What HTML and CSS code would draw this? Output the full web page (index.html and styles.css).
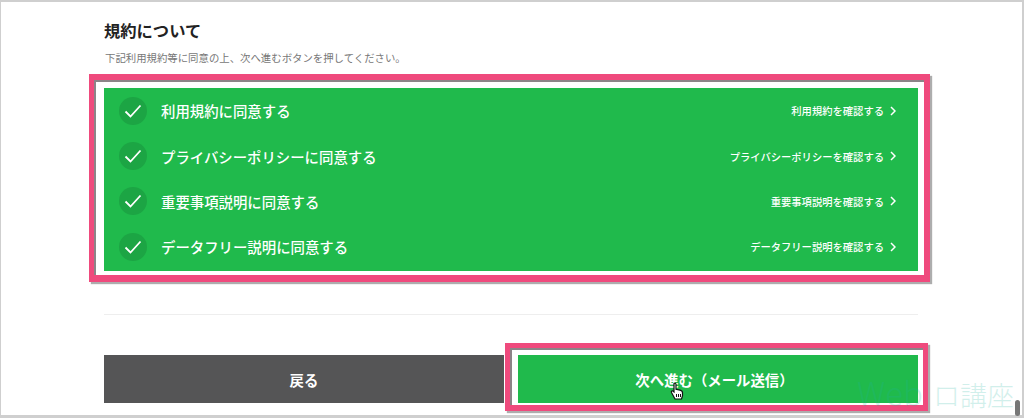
FILE: index.html
```html
<!DOCTYPE html>
<html lang="ja">
<head>
<meta charset="utf-8">
<title>規約について</title>
<link rel="stylesheet" href="styles.css">
</head>
<body>
<main class="frame">
  <h2 class="title">規約について</h2>
  <p class="lead">下記利用規約等に同意の上、次へ進むボタンを押してください。</p>
  <ul class="terms">
    <li class="term">
      <span class="check"><svg viewBox="0 0 28 28" width="28" height="28"><path d="M6.500 14.500l5 5 10-11" fill="none" stroke="#fff" stroke-width="1.800"/></svg></span>
      <span class="term-label">利用規約に同意する</span>
      <a class="term-link">利用規約を確認する<svg class="chev" viewBox="0 0 6 10" width="6" height="10"><path d="M1 1l4 4-4 4" fill="none" stroke="#fff" stroke-width="1.500"/></svg></a>
    </li>
    <li class="term">
      <span class="check"><svg viewBox="0 0 28 28" width="28" height="28"><path d="M6.500 14.500l5 5 10-11" fill="none" stroke="#fff" stroke-width="1.800"/></svg></span>
      <span class="term-label">プライバシーポリシーに同意する</span>
      <a class="term-link">プライバシーポリシーを確認する<svg class="chev" viewBox="0 0 6 10" width="6" height="10"><path d="M1 1l4 4-4 4" fill="none" stroke="#fff" stroke-width="1.500"/></svg></a>
    </li>
    <li class="term">
      <span class="check"><svg viewBox="0 0 28 28" width="28" height="28"><path d="M6.500 14.500l5 5 10-11" fill="none" stroke="#fff" stroke-width="1.800"/></svg></span>
      <span class="term-label">重要事項説明に同意する</span>
      <a class="term-link">重要事項説明を確認する<svg class="chev" viewBox="0 0 6 10" width="6" height="10"><path d="M1 1l4 4-4 4" fill="none" stroke="#fff" stroke-width="1.500"/></svg></a>
    </li>
    <li class="term">
      <span class="check"><svg viewBox="0 0 28 28" width="28" height="28"><path d="M6.500 14.500l5 5 10-11" fill="none" stroke="#fff" stroke-width="1.800"/></svg></span>
      <span class="term-label">データフリー説明に同意する</span>
      <a class="term-link">データフリー説明を確認する<svg class="chev" viewBox="0 0 6 10" width="6" height="10"><path d="M1 1l4 4-4 4" fill="none" stroke="#fff" stroke-width="1.500"/></svg></a>
    </li>
  </ul>
  <hr class="rule">
  <div class="actions">
    <a class="btn btn-back">戻る</a>
    <a class="btn btn-next">次へ進む（メール送信）</a>
  </div>
</main>
<div class="mark mark-terms"></div>
<div class="mark mark-next"></div>
<svg class="cursor" viewBox="0 0 14 18" width="14" height="18"><path d="M4 1.500c1-.8 2-.2 2 .8v5l4 .9c1.600.4 2.500 1 2.500 2.500v3l-1 3.300H5L1.500 10.500c-.6-1.300.8-2 1.700-1.200L4 10z" fill="#fff" stroke="#111" stroke-width="1.200"/><path d="M6.500 12v3M8.500 12v3M10.500 12v3" stroke="#111" stroke-width="1"/></svg>
<div class="watermark">Web<span class="wm-jp">ロ講座</span></div>
<div class="scroll-thumb"></div>
</body>
</html>
```
FILE: styles.css
```css
* { box-sizing: border-box; }
html, body { margin: 0; padding: 0; height: 418px; overflow: hidden; background: #fff; }
body { font-family: "Noto Sans CJK JP", "Noto Sans", sans-serif; position: relative; }
.frame {
  height: 418px;
  padding: 18px 104px 0 103px;
  border: 1px solid #cfcfcf;
  border-top-width: 2px;
  border-bottom-width: 3px;
  border-right-width: 2px;
  overflow: hidden;
}
.title { margin: 0; font-size: 16.300px; line-height: 20px; font-weight: 700; color: #222; }
.lead { margin: 11px 0 0; padding-left: 1px; font-size: 10.400px; line-height: 14px; color: #777; }
.terms { list-style: none; margin: 23px 0 0; padding: 0 0 1px 15px; background: #20ba4c; height: 183px; }
.term { display: flex; align-items: center; height: 45.400px; }
.check {
  width: 28px; height: 28px; border-radius: 50%; background: #1ca544;
  display: flex; flex: none;
}
.term-label { margin-left: 14px; font-size: 14.400px; font-weight: 500; color: #fff; }
.term-link { margin-left: auto; margin-right: 22px; display: flex; align-items: center; font-size: 10.300px; font-weight: 500; color: #fff; }
.chev { margin-left: 6px; }
.rule { margin: 43px 0 0; border: 0; border-top: 1px solid #eee; }
.actions { display: grid; grid-template-columns: 1fr 1fr; gap: 14px; margin-top: 40px; }
.btn { height: 48px; display: flex; align-items: center; justify-content: center; color: #fff; font-size: 14.400px; font-weight: 700; }
.btn-back { background: #555556; }
.btn-next { background: #20ba4c; padding-right: 7px; }
.mark { position: absolute; border: 5px solid #ef4a7d; box-shadow: inset 2px 2px 0 #8c8488, 2px 2px 1px #77777799; }
.mark-terms { left: 89px; top: 74px; width: 841px; height: 208px; border-top-width: 6px; border-bottom-width: 7px; border-right-width: 6px; }
.mark-next { left: 505px; top: 343px; width: 423px; height: 68px; border-bottom-width: 6px; }
.cursor { position: absolute; left: 670px; top: 382px; }
.watermark { position: absolute; left: 857px; top: 374px; font-size: 33px; line-height: 36px; color: #1fb5a0; opacity: .2; font-weight: 300; white-space: nowrap; }
.wm-jp { margin-left: 10px; font-size: 27px; }
.scroll-thumb { position: absolute; left: 1015px; top: 400px; width: 5px; height: 16px; border-radius: 3px; background: #777; }
```
